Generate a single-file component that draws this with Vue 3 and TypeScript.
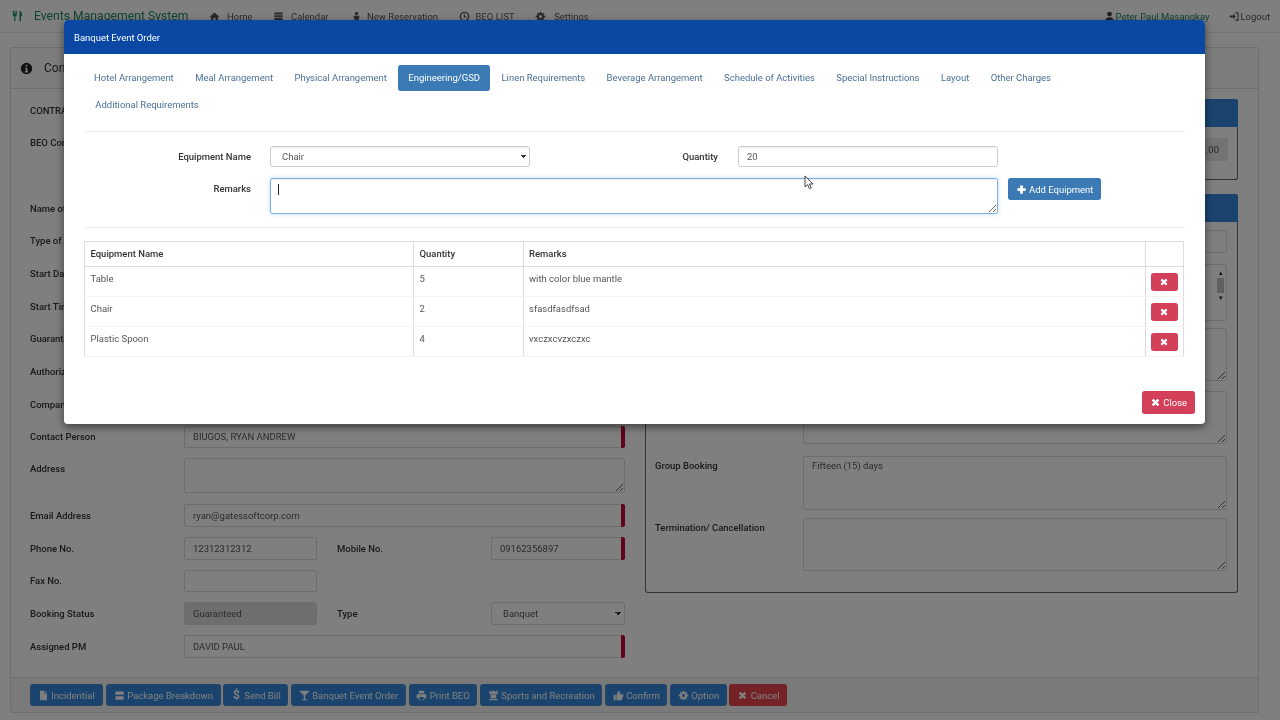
<script setup lang="ts">
const icons: Record<string, string> = {
  times: 'M2.5 5L5 2.5L8 5.5L11 2.5L13.5 5L10.5 8L13.5 11L11 13.5L8 10.5L5 13.5L2.5 11L5.5 8Z',
  plus: 'M6 2h4v4h4v4h-4v4H6v-4H2V6h4z',
  home: 'M8 2L15 8.5L13.5 9L13 9V14H9.5V10H6.5V14H3V9L1 8.5Z',
  calendar: 'M2 2h12v3H2z M2 6h12v3H2z M2 10h12v3H2z',
  user: 'M8 1a3.5 3.5 0 1 1 0 7a3.5 3.5 0 0 1 0-7z M2 15c0-4 2-6 6-6s6 2 6 6z',
  reserve: 'M8 1a2.5 2.5 0 1 1 0 5a2.5 2.5 0 0 1 0-5z M4 7h8v4h-1v4H5v-4H4z',
  clock: 'M8 1a7 7 0 1 0 0 14A7 7 0 0 0 8 1zm0 2a5 5 0 1 1 0 10A5 5 0 0 1 8 3z M7 4.5h1.5V8H11v1.5H7z',
  cog: 'M7 1H9L9.4 3L11 3.7L12.6 2.5L13.5 3.4L12.3 5L13 6.6L15 7V9L13 9.4L12.3 11L13.5 12.6L12.6 13.5L11 12.3L9.4 13L9 15H7L6.6 13L5 12.3L3.4 13.5L2.5 12.6L3.7 11L3 9.4L1 9V7L3 6.6L3.7 5L2.5 3.4L3.4 2.5L5 3.7L6.6 3Z M8 5.8a2.2 2.2 0 1 0 0 4.4a2.2 2.2 0 0 0 0-4.4z',
  cutlery: 'M1 1v5c0 1.5 1 2 2 2.3V15h1.5V8.3c1-.3 2-.8 2-2.3V1H5.5v4H4.6V1H3.4v4h-.9V1z M10 1c2.5 0 3.5 3 3.5 7H12v7h-2z',
  info: 'M8 1a7 7 0 1 0 0 14A7 7 0 0 0 8 1z M7 3.5h2v2H7z M6.5 7H9v4.5h1V13H6v-1.5h1V8.5h-.5z',
  file: 'M3 1h6v4h4v10H3z M10 1l3 3h-3z',
  package: 'M2 2h12v5H2z M2 9h12v5H2z',
  glass: 'M1 1h14v1L9 8v5l3 1v1H4v-1l3-1V8L1 2z',
  print: 'M4 1h8v4H4z M1 6h14v6h-3v3H4v-3H1z M5 10h6v4H5z',
  tower: 'M2 1h2v1.5h2V1h4v1.5h2V1h2v5H2z M4 7h8v5H4z M2 13h12v2H2z',
  thumb: 'M1 7h3v8H1z M5 7l3-6c1.2 0 2 1 2 2v3h4c1 0 1.5 1 1 2l-2 6c-.2.6-.7 1-1.3 1H5z',
  logout: 'M1 6.5h5V4l4 4-4 4V9.5H1z M9 2h5v12H9v-1.5h3.5v-9H9z',
}

const navLinks = [
  { icon: 'home', text: 'Home', gap: 7 },
  { icon: 'calendar', text: 'Calendar', gap: 7 },
  { icon: 'reserve', text: 'New Reservation', gap: 5 },
  { icon: 'clock', text: 'BEO LIST', gap: 6 },
  { icon: 'cog', text: 'Settings', gap: 8 },
]

const tabs = [
  'Hotel Arrangement', 'Meal Arrangement', 'Physical Arrangement', 'Engineering/GSD',
  'Linen Requirements', 'Beverage Arrangement', 'Schedule of Activities',
  'Special Instructions', 'Layout', 'Other Charges', 'Additional Requirements',
]

const equipment = [
  { name: 'Table', qty: 5, remarks: 'with color blue mantle' },
  { name: 'Chair', qty: 2, remarks: 'sfasdfasdfsad' },
  { name: 'Plastic Spoon', qty: 4, remarks: 'vxczxcvzxczxc' },
]

const upperRows = [
  { label: 'CONTRACT NO.' }, { label: 'BEO Control No.' }, { label: '' },
  { label: 'Name of Event' }, { label: 'Type of Event' }, { label: 'Start Date' },
  { label: 'Start Time' }, { label: 'Guaranteed Pax' }, { label: 'Authorized By' },
  { label: 'Company' },
]

const actions = [
  { icon: 'file', text: 'Incidential' },
  { icon: 'package', text: 'Package Breakdown' },
  { icon: '', text: 'Send Bill' },
  { icon: 'glass', text: 'Banquet Event Order' },
  { icon: 'print', text: 'Print BEO' },
  { icon: 'tower', text: 'Sports and Recreation' },
  { icon: 'thumb', text: 'Confirm' },
  { icon: 'cog', text: 'Option' },
]

const groupBooking = 'Fifteen (15) days'
</script>

<template>
  <div class="app">
    <header class="nav">
      <svg class="ic logo" viewBox="0 0 16 16"><path :d="icons.cutlery" /></svg>
      <span class="brand">Events Management System</span>
      <a v-for="l in navLinks" :key="l.text" class="nav-link" :style="{ gap: l.gap + 'px' }">
        <svg class="ic" viewBox="0 0 16 16" fill-rule="evenodd"><path :d="icons[l.icon]" /></svg>
        <span>{{ l.text }}</span>
      </a>
      <span class="spacer"></span>
      <a class="nav-user">
        <svg class="ic" viewBox="0 0 16 16"><path :d="icons.user" /></svg>
        <span>Peter Paul Masangkay</span>
      </a>
      <a class="nav-logout">
        <svg class="ic" viewBox="0 0 16 16"><path :d="icons.logout" /></svg>
        <span>Logout</span>
      </a>
    </header>

    <main class="main">
      <section class="card">
        <div class="card-head">
          <svg class="ic info" viewBox="0 0 16 16" fill-rule="evenodd"><path :d="icons.info" /></svg>
          <span>Contract Information</span>
        </div>
        <div class="card-body">
          <div class="col-left">
            <div v-for="(r, i) in upperRows" :key="i" class="row">
              <label class="lab">{{ r.label }}</label>
              <input v-if="r.label" class="ctl grow" />
            </div>
            <div class="row">
              <label class="lab">Contact Person</label>
              <div class="req grow"><input class="ctl" value="BIUGOS, RYAN ANDREW" /></div>
            </div>
            <div class="row tall">
              <label class="lab">Address</label>
              <textarea class="ctl grow addr"></textarea>
            </div>
            <div class="row">
              <label class="lab">Email Address</label>
              <div class="req grow"><input class="ctl" value="ryan@gatessoftcorp.com" /></div>
            </div>
            <div class="row">
              <label class="lab">Phone No.</label>
              <input class="ctl small" value="12312312312" />
              <label class="lab2">Mobile No.</label>
              <div class="req small2"><input class="ctl" value="09162356897" /></div>
            </div>
            <div class="row">
              <label class="lab">Fax No.</label>
              <input class="ctl small" />
            </div>
            <div class="row">
              <label class="lab">Booking Status</label>
              <input class="ctl small off" value="Guaranteed" />
              <label class="lab2">Type</label>
              <select class="ctl small2 sel"><option>Banquet</option></select>
            </div>
            <div class="row">
              <label class="lab">Assigned PM</label>
              <div class="req grow"><input class="ctl" value="DAVID PAUL" /></div>
            </div>
          </div>

          <div class="col-right">
            <div class="panel p1">
              <div class="panel-head"></div>
              <div class="p1-body"><input class="ctl p1-input" value="0.00" /></div>
            </div>
            <div class="panel p2">
              <div class="panel-head"></div>
              <div class="p2-body">
                <div class="pf f1"><label class="lab3"></label><input class="ctl" /></div>
                <div class="pf f2">
                  <label class="lab3"></label>
                  <div class="multi">
                    <div class="sbar"><i>▴</i><b></b><i>▾</i></div>
                  </div>
                </div>
                <div class="pf f3"><label class="lab3"></label><textarea class="ctl"></textarea></div>
                <div class="pf f4"><label class="lab3"></label><textarea class="ctl"></textarea></div>
                <div class="pf f5"><label class="lab3">Group Booking</label><textarea class="ctl" :value="groupBooking"></textarea></div>
                <div class="pf f6"><label class="lab3">Termination/ Cancellation</label><textarea class="ctl"></textarea></div>
              </div>
            </div>
          </div>
        </div>
        <footer class="card-foot">
          <button v-for="a in actions" :key="a.text" class="btn primary">
            <svg v-if="a.icon" class="ic" viewBox="0 0 16 16" fill-rule="evenodd"><path :d="icons[a.icon]" /></svg>
            <span v-else class="dollar">$</span>
            {{ a.text }}
          </button>
          <button class="btn cancel">
            <svg class="ic" viewBox="0 0 16 16"><path :d="icons.times" /></svg>
            Cancel
          </button>
        </footer>
      </section>
    </main>

    <div class="backdrop"></div>

    <div class="modal">
      <div class="modal-head">Banquet Event Order</div>
      <div class="modal-body">
        <ul class="pills">
          <li v-for="(t, i) in tabs" :key="t" :class="{ active: i === 3 }">{{ t }}</li>
        </ul>
        <hr class="rule r1" />
        <div class="form-row">
          <label class="m-lab">Equipment Name</label>
          <select class="mc m-sel sel"><option>Chair</option></select>
          <label class="m-lab q-lab">Quantity</label>
          <input class="mc m-qty" value="20" />
        </div>
        <div class="form-row second">
          <label class="m-lab">Remarks</label>
          <div class="ta-wrap">
            <textarea class="mc focus"></textarea>
            <span class="caret"></span>
          </div>
          <button class="btn add">
            <svg class="ic" viewBox="0 0 16 16"><path :d="icons.plus" /></svg>
            Add Equipment
          </button>
        </div>
        <hr class="rule r2" />
        <table class="tbl">
          <thead>
            <tr><th class="c1">Equipment Name</th><th class="c2">Quantity</th><th class="c3">Remarks</th><th class="c4"></th></tr>
          </thead>
          <tbody>
            <tr v-for="e in equipment" :key="e.name">
              <td>{{ e.name }}</td>
              <td>{{ e.qty }}</td>
              <td class="td3">{{ e.remarks }}</td>
              <td class="act">
                <button class="del"><svg class="ic" viewBox="0 0 16 16"><path :d="icons.times" /></svg></button>
              </td>
            </tr>
          </tbody>
        </table>
        <div class="modal-foot">
          <button class="btn close">
            <svg class="ic" viewBox="0 0 16 16"><path :d="icons.times" /></svg>
            Close
          </button>
        </div>
      </div>
    </div>

    <svg class="pointer" width="11" height="15" viewBox="0 0 11 15">
      <path d="M1 1V12L3.6 9.6L5.4 13.6L7.2 12.8L5.4 9H9Z" fill="#fff" stroke="#444" stroke-width="1" />
    </svg>
  </div>
</template>

<style>
html, body { margin: 0; background: #fff; }
</style>

<style scoped>
.app {
  position: relative;
  width: 1280px;
  height: 720px;
  overflow: hidden;
  background: #fff;
  font-family: Roboto, "Liberation Sans", sans-serif;
  font-size: 9.47px;
  color: #333;
  filter: blur(0.35px);
}
.ic { width: 11px; height: 11px; fill: currentColor; flex: none; }

/* page behind the dialog */
.nav {
  height: 33px;
  box-sizing: border-box;
  border-bottom: 1px solid #e7e7e7;
  display: flex;
  align-items: center;
  padding: 0 10px 0 12px;
  color: #555;
}
.logo { width: 12px; height: 12px; color: #1c8a5c; margin-right: 10px; }
.brand { color: #1c8a5c; font-size: 12.2px; margin-right: 21px; width: 154px; white-space: nowrap; }
.nav-link { display: flex; align-items: center; margin-right: 20.5px; }
.nav-link:nth-of-type(2) { margin-right: 22.5px; }
.spacer { flex: 1; }
.nav-user { display: flex; align-items: center; gap: 1px; color: #1c8a5c; margin-right: 20px; }
.nav-user .ic { color: #444; }
.nav-logout { display: flex; align-items: center; gap: 0; }

.main { padding: 14px 21px 0 10px; }
.card { border: 1px solid #ddd; border-bottom: 0; border-radius: 3px; }
.card-head {
  height: 40px;
  border-bottom: 1px solid #ddd;
  display: flex;
  align-items: center;
  gap: 11px;
  padding-left: 9px;
  font-size: 12px;
  background: #fafafa;
}
.info { width: 13px; height: 13px; color: #222; }
.card-body { display: flex; height: 588px; box-sizing: border-box; padding: 10px 20px 0 19px; gap: 20px; }
.col-left { width: 595px; flex: none; display: flex; flex-direction: column; }
.col-right { flex: 1; display: flex; flex-direction: column; }
.row { display: flex; align-items: center; height: 22.67px; margin-bottom: 10px; }
.row.tall { height: 35px; align-items: flex-start; margin-bottom: 11px; }
.row.tall .lab { line-height: 22px; }
.lab { width: 154px; flex: none; font-weight: 500; white-space: nowrap; }
.lab2 { width: 154px; flex: none; margin-left: 20px; font-weight: 500; }
.grow { flex: 1; min-width: 0; }
.small { width: 133px; flex: none; }
.small2 { width: 134px; flex: none; }
.ctl {
  box-sizing: border-box;
  height: 22.67px;
  padding: 3px 8px;
  border: 1px solid #d8d8d8;
  border-radius: 2.5px;
  background: #fff;
  font: 9.47px Roboto, "Liberation Sans", sans-serif;
  color: #555;
  outline: none;
}
.addr { height: 35px; resize: vertical; }
.off { background: #ddd; }
.req { box-sizing: border-box; display: flex; border-right: 4px solid #c3073a; border-radius: 2px; height: 22.67px; }
.req .ctl { flex: 1; min-width: 0; border-right: 0; height: 22.67px; }

.panel { border: 1px solid #666; border-top: 0; border-radius: 3px; box-sizing: border-box; }
.panel-head { height: 28px; background: #3488dc; border-radius: 3px 3px 0 0; margin: 0 -1px; }
.p1 { height: 81px; margin-bottom: 14px; }
.p1-body { display: flex; justify-content: flex-end; padding: 11px 9px 0 0; }
.p1-input { width: 424px; background: #e6e6e6; border-color: #e6e6e6; text-align: right; }
.p2 { height: 399px; }
.p2-body { padding: 8px 10px 0 9px; display: flex; flex-direction: column; }
.pf { display: flex; }
.pf .ctl, .multi { flex: 1; min-width: 0; resize: vertical; }
.lab3 { width: 148px; flex: none; font-weight: 500; line-height: 20px; white-space: nowrap; }
.f2 { margin-top: 11px; }
.f3 { margin-top: 7px; } .f3 .ctl { height: 53px; }
.f4 { margin-top: 10px; } .f4 .ctl { height: 53px; }
.f5 { margin-top: 12px; } .f5 .ctl { height: 54px; }
.f6 { margin-top: 8px; } .f6 .ctl { height: 53px; }
.multi {
  box-sizing: border-box;
  height: 57px;
  border: 1px solid #d8d8d8;
  border-radius: 2.5px;
  display: flex;
  justify-content: flex-end;
  padding: 5px 1px 0 0;
}
.sbar { width: 9px; height: 32px; display: flex; flex-direction: column; align-items: center; justify-content: space-between; }
.sbar i { font-style: normal; font-size: 7px; line-height: 7px; color: #222; }
.sbar b { width: 7px; height: 15px; background: #c0c0c0; }

.card-foot {
  height: 36px;
  box-sizing: border-box;
  border-top: 1px solid #ddd;
  border-bottom: 1px solid #ddd;
  background: #f5f5f5;
  display: flex;
  align-items: center;
  gap: 2.67px;
  padding: 0 0 0 19px;
}
.btn {
  height: 22.67px;
  box-sizing: border-box;
  border: 1px solid transparent;
  border-radius: 2.67px;
  padding: 0 6.7px;
  display: inline-flex;
  align-items: center;
  gap: 2.5px;
  font: 9.47px Roboto, "Liberation Sans", sans-serif;
  color: #fff;
  white-space: nowrap;
}
.primary { background: #3488dc; border-color: #4a88c8; }
.primary:first-child { padding-right: 7.7px; }
.cancel { background: #e8454f; }
.dollar { font-size: 12px; font-weight: 700; margin: 0 2px 0 2px; }

.backdrop { position: absolute; inset: 0; background: rgba(0, 0, 0, .5); }

/* dialog */
.modal {
  position: absolute;
  left: 64px;
  top: 20px;
  width: 1141px;
  height: 404px;
  background: #fff;
  border-radius: 4px;
  overflow: hidden;
  box-shadow: 0 3px 9px rgba(0, 0, 0, .5);
}
.modal-head {
  height: 34px;
  display: flex;
  align-items: center;
  padding-left: 10px;
  background: #0b48a4;
  color: #fff;
}
.modal-body { padding: 10.5px 20px 0; }
.pills { list-style: none; margin: 0; padding: 0 10px 0 0; display: flex; flex-wrap: wrap; }
.pills li {
  height: 26.67px;
  box-sizing: border-box;
  display: flex;
  align-items: center;
  padding: 0 10px 1px;
  border-radius: 2.67px;
  color: #4a6f96;
  white-space: nowrap;
}
.pills li + li { margin-left: 1.45px; }
.pills li:last-child { padding-bottom: 0; margin-left: 1.33px; }
.pills li.active { background: #3b7ab5; color: #fff; }
.rule { border: 0; border-top: 1px solid #eee; margin: 0; }
.r1 { margin: 13.2px 0 14px; }
.r2 { margin: 13px 0 12.6px; }
.form-row { display: flex; align-items: center; }
.form-row.second { margin-top: 11px; align-items: flex-start; }
.m-lab { width: 167px; flex: none; text-align: right; margin-right: 19px; font-weight: 500; color: #333; }
.second .m-lab { line-height: 22px; }
.q-lab { width: 188px; margin-right: 20px; }
.mc {
  box-sizing: border-box;
  height: 21px;
  padding: 2px 8px;
  border: 1px solid #ccc;
  border-radius: 2.67px;
  background: #fff;
  font: 9.47px Roboto, "Liberation Sans", sans-serif;
  color: #555;
  outline: none;
  box-shadow: inset 0 1px 1px rgba(0, 0, 0, .075);
}
.m-sel, .m-qty { width: 260px; }
.ctl.sel, .mc.sel {
  appearance: none;
  padding-left: 11px;
  background-image:
    linear-gradient(45deg, transparent 50%, #333 50%),
    linear-gradient(135deg, #333 50%, transparent 50%);
  background-size: 3px 3px, 3px 3px;
  background-position: right 6px center, right 3px center;
  background-repeat: no-repeat;
}
.ta-wrap { position: relative; width: 728px; height: 36px; flex: none; }
.mc.focus {
  width: 100%;
  height: 36px;
  display: block;
  border-color: #7fb0dc;
  box-shadow: inset 0 1px 1px rgba(0, 0, 0, .075), 0 0 4px rgba(102, 175, 233, .45);
}
.caret { position: absolute; left: 8px; top: 6px; width: 1px; height: 11px; background: #222; }
.add {
  margin-left: 10px;
  width: 93px;
  height: 22px;
  background: #3b7ab5;
  justify-content: center;
}
.tbl { width: 1099px; border-collapse: collapse; table-layout: fixed; font-size: 9.47px; }
.tbl th {
  height: 25px;
  padding: 0 5.5px;
  box-sizing: border-box;
  text-align: left;
  font-weight: 500;
  border: 1px solid #ddd;
  border-bottom-width: 1.5px;
}
.c1 { width: 329px; } .c2 { width: 109.5px; } .c3 { width: 622px; } .c4 { width: 38.5px; }
.tbl th.c3 { border-left-color: #f4f4f4; }
.tbl td {
  height: 30px;
  padding: 6.5px 5.5px 0;
  box-sizing: border-box;
  vertical-align: top;
  color: #555;
  border: 1px solid #ddd;
  border-top: 0;
  border-bottom: 1px solid #f3f3f3;
}
.tbl td.td3 { border-left-color: #f4f4f4; }
.tbl td.act { padding: 6.5px 0 0; text-align: center; }
.del {
  width: 27px;
  height: 18px;
  padding: 0;
  border: 0;
  border-radius: 2.67px;
  background: #d43f5a;
  color: #fff;
  display: inline-flex;
  align-items: center;
  justify-content: center;
}
.del .ic { width: 10px; height: 10px; }
.modal-foot { display: flex; justify-content: flex-end; margin: 34.4px -10px 0 0; }
.close { width: 53px; height: 23px; background: #d43f5a; justify-content: center; padding: 0; }

.pointer { position: absolute; left: 804px; top: 175px; }
</style>
